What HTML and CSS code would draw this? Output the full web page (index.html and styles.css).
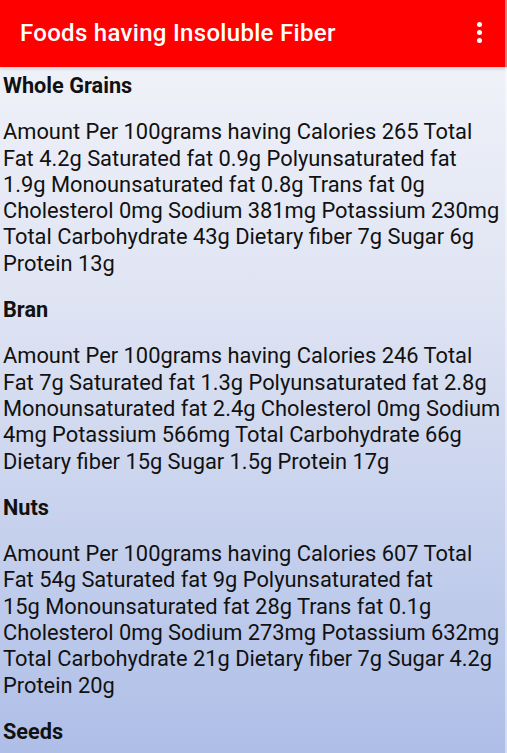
FILE: index.html
```html
<!DOCTYPE html>
<html lang="en">
<head>
    <meta charset="UTF-8">
    <meta name="viewport" content="width=device-width, initial-scale=1.0">
    <title>Foods having Insoluble Fiber</title>
    <link rel="stylesheet" href="styles.css">
</head>
<body>
    <div class="screen">
        <!-- Toolbar -->
        <div class="toolbar">
            <div class="toolbar-title">Foods having Insoluble Fiber</div>
            <div class="overflow-menu">
                <span class="menu-dot"></span>
                <span class="menu-dot"></span>
                <span class="menu-dot"></span>
            </div>
        </div>

        <!-- Food list (line breaks follow the app's own wrapping) -->
        <div class="content">
            <h2 class="food-name">Whole Grains</h2>
            <p class="food-info">Amount Per 100grams having Calories 265 Total<br>
                Fat 4.2g Saturated fat 0.9g Polyunsaturated fat<br>
                1.9g Monounsaturated fat 0.8g Trans fat 0g<br>
                Cholesterol 0mg Sodium 381mg Potassium 230mg<br>
                Total Carbohydrate 43g Dietary fiber 7g Sugar 6g<br>
                Protein 13g</p>

            <h2 class="food-name">Bran</h2>
            <p class="food-info">Amount Per 100grams having Calories 246 Total<br>
                Fat 7g Saturated fat 1.3g Polyunsaturated fat 2.8g<br>
                Monounsaturated fat 2.4g Cholesterol 0mg Sodium<br>
                4mg Potassium 566mg Total Carbohydrate 66g<br>
                Dietary fiber 15g Sugar 1.5g Protein 17g</p>

            <h2 class="food-name">Nuts</h2>
            <p class="food-info">Amount Per 100grams having Calories 607 Total<br>
                Fat 54g Saturated fat 9g Polyunsaturated fat<br>
                15g Monounsaturated fat 28g Trans fat 0.1g<br>
                Cholesterol 0mg Sodium 273mg Potassium 632mg<br>
                Total Carbohydrate 21g Dietary fiber 7g Sugar 4.2g<br>
                Protein 20g</p>

            <h2 class="food-name">Seeds</h2>
        </div>
        <div class="edge"></div>
    </div>
</body>
</html>
```

FILE: styles.css
```css
* {
    margin: 0;
    padding: 0;
    box-sizing: border-box;
}

html, body {
    height: 100%;
}

body {
    font-family: Roboto, "Liberation Sans", sans-serif;
    background: #fff;
    overflow: hidden;
}

.screen {
    position: relative;
    width: 507px;
    height: 753px;
    display: flex;
    flex-direction: column;
    background: linear-gradient(180deg, #f4f5fa 0%, #dfe4f3 40%, #aebee7 100%);
    overflow: hidden;
}

/* thin light strip along the right side of the screenshot */
.edge {
    position: absolute;
    top: 0;
    right: 0;
    bottom: 0;
    width: 2px;
    background: rgba(255, 255, 255, 0.45);
}

/* Toolbar */
.toolbar {
    flex: 0 0 67px;
    background: #ff0000;
    display: flex;
    align-items: center;
    justify-content: space-between;
    padding: 0 25px 0 20px;
    box-shadow: 0 2px 3px rgba(0, 0, 0, 0.15);
}

.toolbar-title {
    color: #fff;
    font-size: 24px;
    font-weight: 500;
    letter-spacing: 0.3px;
    margin-top: -2px;
}

.overflow-menu {
    display: flex;
    flex-direction: column;
    gap: 3px;
    margin-top: -2px;
}

.menu-dot {
    width: 5px;
    height: 5px;
    border-radius: 50%;
    background: #fff;
}

/* Content */
.content {
    padding: 6px 0 0 3px;
    color: #111;
}

.food-name {
    font-size: 21.7px;
    font-weight: 700;
    line-height: 26.3px;
    margin-bottom: 20px;
}

.food-info {
    font-size: 21.85px;
    line-height: 26.3px;
    margin-bottom: 20px;
    white-space: nowrap;
}
```
